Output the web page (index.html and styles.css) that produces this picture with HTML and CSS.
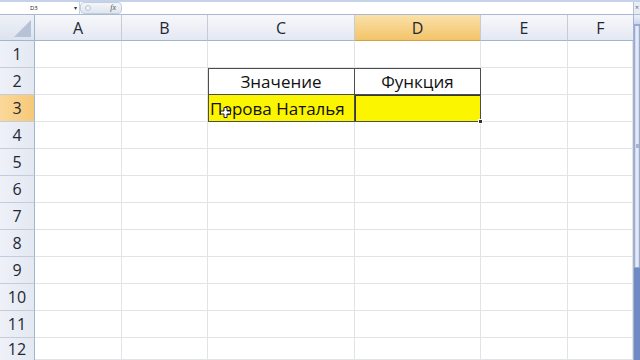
FILE: index.html
```html
<!DOCTYPE html>
<html>
<head>
<meta charset="utf-8">
<link rel="stylesheet" href="styles.css">
</head>
<body>
<div class="app">
  <div class="topline"></div>
  <div class="fbar">
    <div class="namebox"><span class="nb-text">D3</span><span class="nb-arrow">▾</span></div>
    <div class="fxbox"><span class="fx-circle"></span><span class="fx">fx</span></div>
    <div class="finput"></div>
    <div class="fclose">×</div>
  </div>
  <div class="sheet">
    <div class="grid">
      <div class="corner"><svg width="34" height="25" viewBox="0 0 34 25"><polygon points="31,5 31,22 14,22" fill="#b7c2d6"/></svg></div>
      <div class="ch">A</div><div class="ch">B</div><div class="ch">C</div><div class="ch ch-sel">D</div><div class="ch">E</div><div class="ch last">F</div>

      <div class="rh">1</div><div class="c"></div><div class="c"></div><div class="c"></div><div class="c"></div><div class="c"></div><div class="c"></div>
      <div class="rh">2</div><div class="c"></div><div class="c"></div>
      <div class="c t tl tr tb center">Значение</div><div class="c t tr tb center">Функция</div><div class="c"></div><div class="c"></div>
      <div class="rh rh-sel">3</div><div class="c"></div><div class="c"></div>
      <div class="c tl tr tb yellow name">Перова Наталья<svg class="cursor" width="11" height="11" viewBox="0 0 11 11"><path d="M4 0.5h3v3.5h3.5v3h-3.5v3.5h-3v-3.5h-3.5v-3h3.5z" fill="#fff" stroke="#222" stroke-width="1"/></svg></div><div class="c tr tb yellow sel"><span class="handle"></span></div><div class="c"></div><div class="c"></div>
      <div class="rh">4</div><div class="c"></div><div class="c"></div><div class="c"></div><div class="c"></div><div class="c"></div><div class="c"></div>
      <div class="rh">5</div><div class="c"></div><div class="c"></div><div class="c"></div><div class="c"></div><div class="c"></div><div class="c"></div>
      <div class="rh">6</div><div class="c"></div><div class="c"></div><div class="c"></div><div class="c"></div><div class="c"></div><div class="c"></div>
      <div class="rh">7</div><div class="c"></div><div class="c"></div><div class="c"></div><div class="c"></div><div class="c"></div><div class="c"></div>
      <div class="rh">8</div><div class="c"></div><div class="c"></div><div class="c"></div><div class="c"></div><div class="c"></div><div class="c"></div>
      <div class="rh">9</div><div class="c"></div><div class="c"></div><div class="c"></div><div class="c"></div><div class="c"></div><div class="c"></div>
      <div class="rh">10</div><div class="c"></div><div class="c"></div><div class="c"></div><div class="c"></div><div class="c"></div><div class="c"></div>
      <div class="rh">11</div><div class="c"></div><div class="c"></div><div class="c"></div><div class="c"></div><div class="c"></div><div class="c"></div>
      <div class="rh last-row">12</div><div class="c"></div><div class="c"></div><div class="c"></div><div class="c"></div><div class="c"></div><div class="c"></div>
    </div>
    <div class="vscroll">
      <div class="vs-arrow"></div>
      <div class="vs-thumb"><span class="grip"></span></div>
      <div class="vs-track"></div>
    </div>
  </div>
</div>
</body>
</html>
```
FILE: styles.css
```css
* { box-sizing: border-box; }
html, body { margin: 0; padding: 0; }
body {
  width: 640px; height: 360px; overflow: hidden;
  background: #ffffff;
  font-family: "Open Sans", "Noto Sans", sans-serif;
}
.app { width: 640px; height: 360px; display: flex; flex-direction: column; }
.topline { height: 2px; background: #c4d3e9; }
.fbar {
  height: 13px; display: flex; background: #ffffff;
  border-bottom: 1px solid #a9b9d3;
}
.namebox {
  width: 80px; position: relative; display: flex; align-items: center;
  border-right: 1px solid #c8d1df;
}
.nb-text { font-size: 6px; color: #222; margin-left: 30px; line-height: 1; }
.nb-arrow { font-size: 6px; color: #333; margin-left: 36px; line-height: 1; }
.fxbox {
  width: 42px; display: flex; align-items: center; justify-content: space-between;
  background: linear-gradient(#f4f6fa, #dfe5ee);
  border: 1px solid #c3cddc; border-radius: 4px;
  padding: 0 5px 0 4px;
}
.fx-circle { width: 6px; height: 6px; border-radius: 50%; border: 1px solid #b9c4d4; background: #eef1f6; }
.fx { font-family: "Liberation Serif", serif; font-style: italic; font-size: 8px; color: #555; line-height: 1; }
.finput { flex: 1; background: #fff; }
.fclose {
  width: 7px; font-size: 7px; line-height: 12px; text-align: center; color: #666;
  background: #e8edf5; border-left: 1px solid #b5c2d6;
}
.sheet { flex: 1; display: flex; overflow: hidden; }
.grid {
  width: 633px;
  display: grid;
  grid-template-columns: 35px 87px 86px 147px 126px 87px 65px;
  grid-template-rows: 26px repeat(11, 27px) 22px;
}
.corner {
  background: linear-gradient(#eef1f7, #dde3ee);
  border-right: 1px solid #9eb6ce; border-bottom: 1px solid #9eb6ce;
}
.corner svg { display: block; }
.ch {
  background: linear-gradient(#f7f8fb, #e4e8f1);
  border-right: 1px solid #c5ccd8; border-bottom: 1px solid #9eb6ce;
  display: flex; align-items: center; justify-content: center;
  font-size: 16px; color: #1f2733; padding-top: 1px;
}
.ch.last { border-right: none; }
.ch-sel { background: linear-gradient(#fae1a8, #f3c46a); border-bottom-color: #d6a048; }
.rh {
  background: linear-gradient(90deg, #eef1f8, #e3e8f2);
  border-right: 1px solid #9eb6ce; border-bottom: 1px solid #c5ccd8;
  display: flex; align-items: center; justify-content: center;
  font-size: 16px; color: #1f2733;
}
.rh.last-row { border-bottom: none; }
.rh-sel { background: linear-gradient(90deg, #fbd99a, #f6c878); }
.c {
  border-right: 1px solid #e2e3e5; border-bottom: 1px solid #e2e3e5;
  font-size: 17px; color: #111; display: flex; align-items: center;
}
.c.center { justify-content: center; }
.c.tr { border-right-color: #4d4d4d; }
.c.tb { border-bottom-color: #4d4d4d; }
.c.t { box-shadow: inset 0 1px 0 #4d4d4d; }
.c.t.tl { box-shadow: inset 1px 1px 0 #4d4d4d; }
.c.tl { box-shadow: inset 1px 0 0 #4d4d4d; }
.yellow { background: #fcf500; }
.name { padding-left: 2px; position: relative; white-space: nowrap; }
.cursor { position: absolute; left: 12px; top: 12px; }
.sel { position: relative; box-shadow: inset 1px 1px 0 #3a3a3a; }
.handle {
  position: absolute; right: -3px; bottom: -3px; width: 5px; height: 5px;
  background: #333; border: 1px solid #fff;
}
.vscroll {
  width: 7px; display: flex; flex-direction: column;
  background: #e6ebf5; border-left: 1px solid #a5b4d0;
}
.vs-arrow { height: 10px; background: linear-gradient(#eef2fa, #c9d5ec); border-bottom: 1px solid #9aaacb; }
.vs-thumb {
  height: 243px; background: linear-gradient(90deg, #c8d3ec, #eef2fb 50%, #c8d3ec);
  border: 1px solid #9aa9cc; position: relative;
}
.grip { position: absolute; left: 1px; top: 118px; width: 3px; height: 4px; background: #a9b4cf; }
.vs-track { flex: 1; background: #6f8ac4; }
```
